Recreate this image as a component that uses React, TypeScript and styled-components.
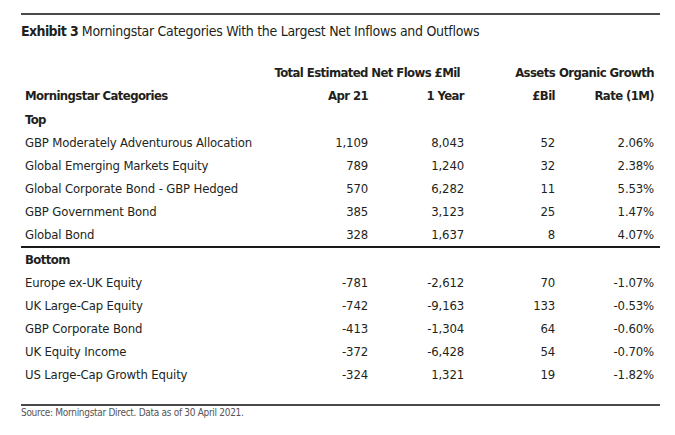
import React from 'react';
import styled, { createGlobalStyle } from 'styled-components';

const GlobalStyle = createGlobalStyle`
    body {
        margin: 0;
        background: #ffffff;
    }
`

const cols = '249px 98px 96px 91px 99px 6px'
const font = `"Liberation Sans Narrow", "DejaVu Sans Condensed", "Liberation Sans", sans-serif`

const Exhibit = styled.div`
    width: 639px;
    padding: 13px 0 0 21px;
    font-family: ${font};
    color: #231f20;
`

const Rule = styled.div<{ $top?: number; $color?: string }>`
    height: 2px;
    margin-top: ${(p) => p.$top || 0}px;
    background: ${(p) => p.$color || '#4a4a4a'};
`

const Title = styled.h1`
    margin: 7px 0 0 0;
    font-size: 14px;
    line-height: 18px;
    letter-spacing: -0.3px;
    font-weight: normal;
    white-space: nowrap;

    b {
        font-weight: bold;
        letter-spacing: -0.6px;
    }
`

const Table = styled.div`
    margin-top: 21px;
`

const Row = styled.div<{ $height?: number }>`
    display: grid;
    grid-template-columns: ${cols};
    height: ${(p) => p.$height || 23}px;
    align-items: center;
    font-size: 13px;
    letter-spacing: -0.15px;
    white-space: nowrap;
`

const Cell = styled.div<{ $left?: boolean; $bold?: boolean; $span?: number }>`
    text-align: ${(p) => (p.$left ? 'left' : 'right')};
    padding-left: ${(p) => (p.$left ? '4px' : '0')};
    font-weight: ${(p) => (p.$bold ? 'bold' : 'normal')};
    letter-spacing: ${(p) => (p.$bold ? '-0.6px' : '-0.15px')};
    grid-column: ${(p) => (p.$span ? `span ${p.$span}` : 'auto')};
`

const SpanHead = styled(Cell)`
    padding-right: 4px;
`

const Source = styled.p`
    margin: 1px 0 0 0;
    font-size: 10px;
    line-height: 12px;
    letter-spacing: -0.3px;
    color: #555555;
`

type Item = [string, string, string, string, string]

const top: Item[] = [
    ['GBP Moderately Adventurous Allocation', '1,109', '8,043', '52', '2.06%'],
    ['Global Emerging Markets Equity', '789', '1,240', '32', '2.38%'],
    ['Global Corporate Bond - GBP Hedged', '570', '6,282', '11', '5.53%'],
    ['GBP Government Bond', '385', '3,123', '25', '1.47%'],
    ['Global Bond', '328', '1,637', '8', '4.07%'],
]

const bottom: Item[] = [
    ['Europe ex-UK Equity', '-781', '-2,612', '70', '-1.07%'],
    ['UK Large-Cap Equity', '-742', '-9,163', '133', '-0.53%'],
    ['GBP Corporate Bond', '-413', '-1,304', '64', '-0.60%'],
    ['UK Equity Income', '-372', '-6,428', '54', '-0.70%'],
    ['US Large-Cap Growth Equity', '-324', '1,321', '19', '-1.82%'],
]

const DataRow = ({ item }: { item: Item }) => (
    <Row>
        <Cell $left>{item[0]}</Cell>
        <Cell>{item[1]}</Cell>
        <Cell>{item[2]}</Cell>
        <Cell>{item[3]}</Cell>
        <Cell>{item[4]}</Cell>
    </Row>
)

export default function App() {
    return (
        <>
            <GlobalStyle />
            <Exhibit>
                <Rule />
                <Title>
                    <b>Exhibit 3</b> Morningstar Categories With the Largest Net Inflows and Outflows
                </Title>
                <Table>
                    <Row>
                        <Cell />
                        <SpanHead $bold $span={2}>Total Estimated Net Flows £Mil</SpanHead>
                        <Cell $bold>Assets</Cell>
                        <Cell $bold>Organic Growth</Cell>
                    </Row>
                    <Row>
                        <Cell $left $bold>Morningstar Categories</Cell>
                        <Cell $bold>Apr 21</Cell>
                        <Cell $bold>1 Year</Cell>
                        <Cell $bold>£Bil</Cell>
                        <Cell $bold>Rate (1M)</Cell>
                    </Row>
                    <Row $height={24}>
                        <Cell $left $bold>Top</Cell>
                    </Row>
                    {top.map((item) => (
                        <DataRow key={item[0]} item={item} />
                    ))}
                    <Rule $color="#1a1a1a" />
                    <Row>
                        <Cell $left $bold>Bottom</Cell>
                    </Row>
                    {bottom.map((item) => (
                        <DataRow key={item[0]} item={item} />
                    ))}
                </Table>
                <Rule $top={18} />
                <Source>Source: Morningstar Direct. Data as of 30 April 2021.</Source>
            </Exhibit>
        </>
    )
}
